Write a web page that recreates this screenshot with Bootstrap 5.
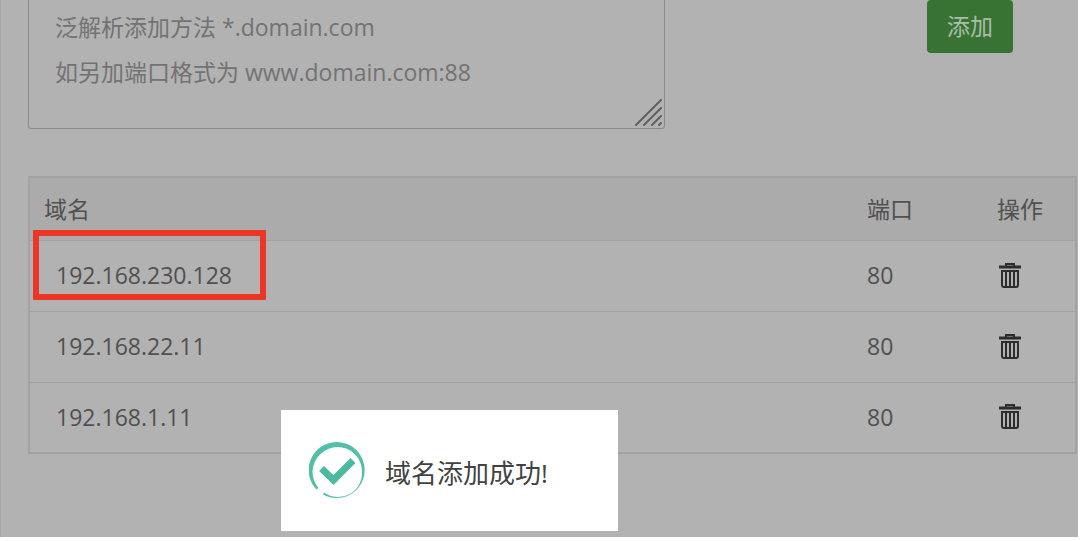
<!DOCTYPE html>
<html lang="zh-CN">
<head>
<meta charset="utf-8">
<meta name="viewport" content="width=device-width, initial-scale=1">
<title>域名管理</title>
<link href="https://cdn.jsdelivr.net/npm/bootstrap@5.3.0/dist/css/bootstrap.min.css" rel="stylesheet">
<style>
  body { font-family: "Open Sans", "Noto Sans CJK SC", sans-serif; font-size: 23px; background: #fff; color: #505050; }
  .site-panel { background: #b2b2b2; border-left: 1px solid #a6a6a6; margin-right: 2px; padding: 0 1px 83px 27px; }
  .domain-form { gap: 262px; padding-right: 64px; margin-bottom: 47px; }
  .domain-input { display: block; resize: none; overflow: hidden; height: 129px; padding: 5px 26px; font-size: 23px; line-height: 45px;
    background: transparent; border: 1px solid #8a8a8a; border-top: 0; border-radius: 0 0 3px 3px; }
  .domain-input:focus { background: transparent; }
  .domain-input::placeholder { color: #737373; opacity: 1; }
  .grip { right: 2px; bottom: 2px; pointer-events: none; }
  .btn-add { background: #387334; color: #a9bda8; border: 0; border-radius: 4px; font-size: 23px; width: 86px; height: 53px; padding: 0; }
  .btn-add:hover { background: #2f642c; color: #b2c4b1; }
  .domain-table { border: 2px solid #a2a2a2; table-layout: fixed; color: #505050; --bs-table-bg: transparent; --bs-table-color: #505050; }
  .domain-table > :not(caption) > * > * { padding: 0 14px; border-color: #a2a2a2; border-width: 0 0 1px; vertical-align: middle; }
  .domain-table thead th { height: 63px; font-weight: 400; background: #ababab; }
  .domain-table tbody td { height: 71px; }
  .domain-table tbody td:first-child { padding-left: 26px; }
  .col-port { width: 130px; }
  .col-op { width: 93px; }
  .highlight { inset: -11px auto auto 3px; width: 233px; height: 70px; border: 6px solid #eb3626; border-radius: 1px; pointer-events: none; }
  .btn-del { display: block; color: #2d2d2d; padding: 0 2px 2px; border: 0; }
  .notice { left: 26%; bottom: 6px; width: 337px; height: 121px; padding: 0 28px; gap: 18px; background: #fff; color: #424242; font-size: 26px; line-height: 40px; }
  .notice-text { padding-top: 4px; }
</style>
</head>
<body>
<main class="site-panel position-relative">
  <form class="domain-form d-flex align-items-start">
    <div class="position-relative flex-fill">
      <textarea class="form-control domain-input" aria-label="域名" placeholder="泛解析添加方法 *.domain.com&#10;如另加端口格式为 www.domain.com:88"></textarea>
      <svg class="grip position-absolute" width="28" height="28" viewBox="0 0 28 28" fill="none" stroke="#606060" stroke-width="2" stroke-linecap="round" aria-hidden="true"><path d="M1 26 26 1M9 26 26 9M17 26l9-9M24 26l2-2"/></svg>
    </div>
    <button type="button" class="btn btn-add flex-shrink-0">添加</button>
  </form>

  <table class="table domain-table mb-0">
    <colgroup><col><col class="col-port"><col class="col-op"></colgroup>
    <thead><tr><th scope="col">域名</th><th scope="col">端口</th><th scope="col">操作</th></tr></thead>
    <tbody>
      <tr>
        <td class="position-relative">192.168.230.128<span class="highlight position-absolute"></span></td>
        <td>80</td>
        <td><button type="button" class="btn btn-del" aria-label="删除"><svg class="d-block" width="22" height="26" viewBox="0 0 22 26" aria-hidden="true"><use href="#trash"/></svg></button></td>
      </tr>
      <tr>
        <td>192.168.22.11</td>
        <td>80</td>
        <td><button type="button" class="btn btn-del" aria-label="删除"><svg class="d-block" width="22" height="26" viewBox="0 0 22 26" aria-hidden="true"><use href="#trash"/></svg></button></td>
      </tr>
      <tr>
        <td>192.168.1.11</td>
        <td>80</td>
        <td><button type="button" class="btn btn-del" aria-label="删除"><svg class="d-block" width="22" height="26" viewBox="0 0 22 26" aria-hidden="true"><use href="#trash"/></svg></button></td>
      </tr>
    </tbody>
  </table>

  <div class="notice position-absolute d-flex align-items-center" role="status">
    <svg class="flex-shrink-0" width="58" height="58" viewBox="0 0 58 58" fill="none" aria-hidden="true">
      <path fill="#52bfa7" d="M7.500 47.500A28 28 0 1 1 14 52.500L15 50.500A24 24 0 0 0 53 29A24.500 24.500 0 0 0 28.500 5A25.500 25.500 0 0 0 3.500 29.500Q3.500 39 9.500 46Z"/>
      <path stroke="#4cb9a1" stroke-width="7" d="m12.500 26.500 12 11.500 19.500-19.500"/>
    </svg>
    <span class="notice-text">域名添加成功!</span>
  </div>
</main>

<svg class="d-none" aria-hidden="true">
  <symbol id="trash" viewBox="0 0 22 26">
    <path d="M7 4V2h8v2" fill="none" stroke="currentColor" stroke-width="2"/>
    <path d="M0 3.500h22v3H0z" fill="currentColor"/>
    <path d="M3 9h16v14q0 2-2 2H5q-2 0-2-2z" fill="none" stroke="currentColor" stroke-width="2"/>
    <path d="M7 9v15M11 9v15M15 9v15" stroke="currentColor" stroke-width="2"/>
  </symbol>
</svg>
<script src="https://cdn.jsdelivr.net/npm/bootstrap@5.3.0/dist/js/bootstrap.bundle.min.js"></script>
</body>
</html>
